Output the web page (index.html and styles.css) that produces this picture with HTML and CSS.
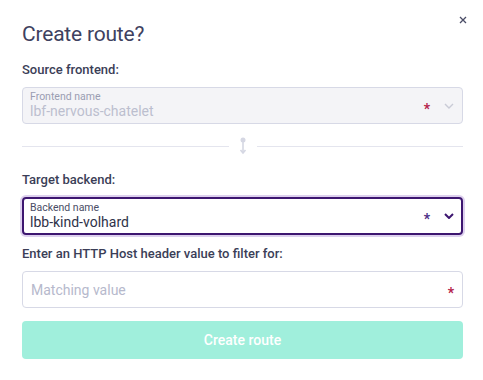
FILE: index.html
```html
<!DOCTYPE html>
<html lang="en">
<head>
    <meta charset="UTF-8">
    <meta name="viewport" content="width=device-width, initial-scale=1.0">
    <title>Create route</title>
    <link rel="stylesheet" href="styles.css">
</head>
<body>

<div class="modal">
    <button class="close" aria-label="Close">
        <svg width="8" height="8" viewBox="0 0 8 8"><path d="M1 1L7 7M7 1L1 7" stroke="#4a4d66" stroke-width="1.3"/></svg>
    </button>

    <h2>Create route?</h2>

    <div class="field-label">Source frontend:</div>
    <div class="select disabled">
        <div class="select-text">
            <span class="small-label">Frontend name</span>
            <span class="value">lbf-nervous-chatelet</span>
        </div>
        <span class="req">*</span>
        <svg class="chevron" width="10" height="6" viewBox="0 0 10 6"><path d="M1 1L5 5L9 1" fill="none" stroke="#c9cbd6" stroke-width="1.4"/></svg>
    </div>

    <div class="divider">
        <span class="line"></span>
        <svg class="link-icon" width="8" height="18" viewBox="0 0 8 18">
            <circle cx="4" cy="3" r="2.5" fill="#d5d7e3"/>
            <path d="M4 3V15" stroke="#d5d7e3" stroke-width="1.6"/>
            <path d="M1.5 13L4 16L6.5 13" fill="none" stroke="#d5d7e3" stroke-width="1.6"/>
        </svg>
        <span class="line"></span>
    </div>

    <div class="field-label">Target backend:</div>
    <div class="select focused">
        <div class="select-text">
            <span class="small-label">Backend name</span>
            <span class="value">lbb-kind-volhard</span>
        </div>
        <span class="req purple">*</span>
        <svg class="chevron" width="10" height="6" viewBox="0 0 10 6"><path d="M1 1L5 5L9 1" fill="none" stroke="#3d1670" stroke-width="2"/></svg>
    </div>

    <div class="field-label">Enter an HTTP Host header value to filter for:</div>
    <div class="input">
        <span class="placeholder">Matching value</span>
        <span class="req">*</span>
    </div>

    <button class="submit">Create route</button>
</div>

</body>
</html>
```

FILE: styles.css
```css
* {
    margin: 0;
    padding: 0;
    box-sizing: border-box;
    font-family: Roboto, "Liberation Sans", sans-serif;
}

body {
    background-color: white;
    width: 483px;
    height: 380px;
}

.modal {
    position: relative;
    padding: 21px 20px 0 22px;
    display: flex;
    flex-direction: column;
}

.close {
    position: absolute;
    top: 16px;
    right: 16px;
    width: 8px;
    height: 8px;
    border: none;
    background: none;
    display: flex;
}

h2 {
    font-size: 21px;
    font-weight: 400;
    color: #3e4160;
    line-height: 26px;
    letter-spacing: -0.2px;
}

.field-label {
    font-size: 13px;
    font-weight: 500;
    color: #3b3e57;
    line-height: 16px;
}

h2 + .field-label {
    margin-top: 15px;
}

.select, .input {
    height: 37px;
    border: 1px solid #d7d9e6;
    border-radius: 4px;
    display: flex;
    align-items: center;
    padding: 0 8px 0 7px;
    margin-top: 9px;
}

.select.disabled {
    background-color: #f4f4f7;
}

.select.focused {
    height: 38px;
    border: 2px solid #3d1670;
    box-shadow: 0 0 0 2px #ddd0ee;
    padding-left: 6px;
    padding-right: 7px;
}

.select-text {
    flex: 1;
    display: flex;
    flex-direction: column;
}

.small-label {
    font-size: 10.5px;
    line-height: 12px;
    color: #9a9db2;
}

.focused .small-label {
    color: #4a4d66;
}

.value {
    font-size: 14px;
    line-height: 17px;
    color: #bcbfcf;
}

.focused .value {
    color: #2f3249;
}

.req {
    color: #b5224a;
    font-size: 14px;
    font-weight: 700;
    line-height: 10px;
    margin-top: 6px;
}

.req.purple {
    color: #4c2d86;
}

.chevron {
    margin-left: 14px;
}

.divider {
    display: flex;
    align-items: center;
    gap: 10px;
    margin: 13px 0 17px;
}

.line {
    flex: 1;
    height: 1px;
    background-color: #e4e5ee;
}

.input {
    margin-top: 9px;
    padding-left: 8px;
    padding-right: 8px;
}

.placeholder {
    flex: 1;
    font-size: 14px;
    color: #b6b9cc;
}

.select.focused + .field-label {
    margin-top: 11px;
}

.submit {
    margin-top: 13px;
    height: 38px;
    border: none;
    border-radius: 4px;
    background-color: #a0efdc;
    color: white;
    font-size: 14px;
    font-weight: 500;
}
```
